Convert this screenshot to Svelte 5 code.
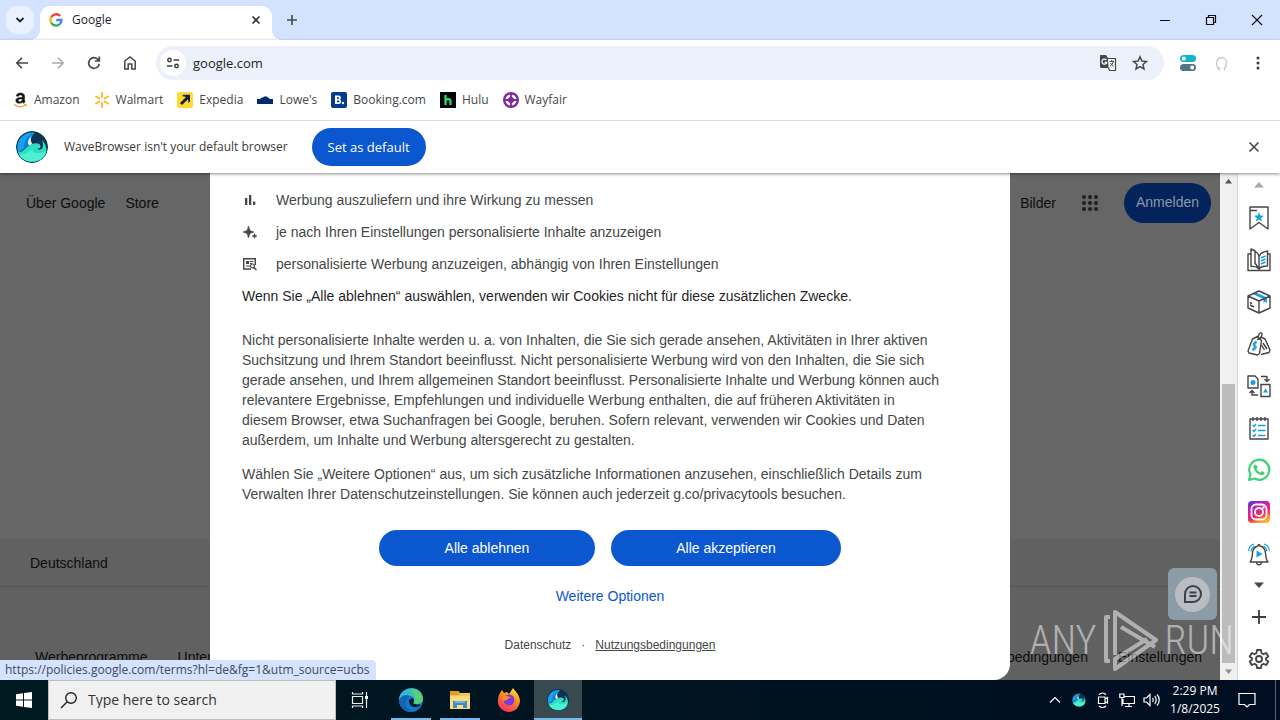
<script>
  const bookmarks = ['Amazon', 'Walmart', 'Expedia', "Lowe's", 'Booking.com', 'Hulu', 'Wayfair'];
  const tools = ['Bookmarks', 'Reading list', 'Packages', 'Coupons', 'Converter', 'Tasks', 'WhatsApp', 'Instagram', 'Alerts'];
  const purposes = [
    { icon: 'bars', text: 'Werbung auszuliefern und ihre Wirkung zu messen' },
    { icon: 'spark', text: 'je nach Ihren Einstellungen personalisierte Inhalte anzuzeigen' },
    { icon: 'ads', text: 'personalisierte Werbung anzuzeigen, abhängig von Ihren Einstellungen' }
  ];
  const dots = [3, 9, 15];
  let url = $state('google.com');
  let query = $state('');
</script>

{#snippet wave(size)}
  <svg width={size} height={size} viewBox="0 0 32 32" aria-hidden="true">
    <circle cx="16" cy="16" r="16" fill="#0b3450" />
    <path d="M1.500 19C0 9 7 1.500 16 1.500C20 1.500 18 3 16 5C13 8 11 11 11.500 15C8 16 6 20 2.500 22Z" fill="#16a2ee" />
    <path d="M16 3C10 6 7 12 8.500 18L12 15C11 11 13 7 17 3Z" fill="#0c7fd6" />
    <path d="M15.500 5C12 8 11 12 13 15L16.500 13C14.500 11 14.500 8 15.500 5Z" fill="#d9efff" />
    <path d="M2 21C7 22 9 16 15 13.500C20 11.500 24 12 24.500 15C24.700 17 23 18 21 17.500C25 21 29 17 26 9C31 14 32 21 28 26C21 34 5 32 2 21Z" fill="#2fdcc4" />
    <path d="M3 23C10 25 12 20 17 18.500C15 22 22 24 29.500 20C27 33 8 34 3 23Z" fill="#4df2d0" />
  </svg>
{/snippet}

{#snippet mark(name)}
  <svg width="16" height="16" viewBox="0 0 16 16" aria-hidden="true">
    {#if name === 'Amazon'}
      <path d="M10.300 5.500V4.200C10.300 2.600 6.700 2.500 6.400 4.300L4.200 4C4.700-.2 12.500.1 12.500 3.900V8.200C12.500 9 13 9.300 13.200 9.800L11.600 11.200C11 10.800 10.700 10.200 10.500 9.900C8 12.300 3.800 11.500 3.800 8.500C3.800 6.100 6.500 5.300 10.300 5.500ZM10.300 7C8 6.900 6.200 7.200 6.200 8.500C6.200 10.400 10.600 10.200 10.300 7Z" fill="#111" stroke="#111" stroke-width=".5" />
      <path d="M2 12.500C6 15.500 10.500 15.200 14 12.800" fill="none" stroke="#f5a031" stroke-width="1.300" />
      <path d="M12.200 12.300L14.300 12.300L13.700 14.300" fill="none" stroke="#f5a031" />
    {:else if name === 'Walmart'}
      <g stroke="#fdbb30" stroke-width="2" stroke-linecap="round">
        <path d="M8 1V5M8 11V15M2 4.500L5.300 6.400M10.700 9.600L14 11.500M2 11.500L5.300 9.600M10.700 6.400L14 4.500" />
      </g>
    {:else if name === 'Expedia'}
      <rect width="16" height="16" rx="2" fill="#fddb32" />
      <path d="M5 4L6.500 2.800H13V9.500L11.500 11L11 7.300L5 13L3 11L9 5Z" fill="#1d1d38" />
    {:else if name === "Lowe's"}
      <path d="M0 7H3L5 5.500H6L7 4.500H10L11 5.500L13 7H16V12H0Z" fill="#012a73" />
    {:else if name === 'Booking.com'}
      <rect width="16" height="16" rx="2" fill="#063a91" />
      <path d="M4 3.500H7.500C10.300 3.500 10.400 7 8.800 7.500C11 8 10.800 12 7.700 12H4ZM6 5.300V7H7.200C8.400 7 8.300 5.300 7.200 5.300ZM6 8.600V10.300H7.400C8.700 10.300 8.700 8.600 7.400 8.600Z" fill="#fff" />
      <circle cx="12" cy="11" r="1.200" fill="#fff" />
    {:else if name === 'Hulu'}
      <rect width="16" height="16" fill="#050505" />
      <path d="M5.500 3V13M5.500 9C5.500 6.500 10.500 6.500 10.500 9V13" fill="none" stroke="#25dd7b" stroke-width="2.200" />
    {:else}
      <circle cx="8" cy="8" r="8" fill="#7f2a9f" />
      <circle cx="8" cy="8" r="4.300" fill="none" stroke="#fff" stroke-width="2.600" />
      <path d="M8 2V14M2 8H14" stroke="#7f2a9f" stroke-width="1.800" />
      <circle cx="8" cy="8" r="2.700" fill="#7f2a9f" />
    {/if}
  </svg>
{/snippet}

{#snippet tool(name)}
  <svg width="24" height="24" viewBox="0 0 24 24" fill="none" stroke="#474347" stroke-width="1.400" stroke-linejoin="round" aria-hidden="true">
    {#if name === 'Bookmarks'}
      <path d="M3 1H21V23L12 16.500L3 23ZM3 4.500H10" />
      <path d="M12 6L13.300 9.500L17 9.700L14.100 12L15.100 15.500L12 13.500L8.900 15.500L9.900 12L7 9.700L10.700 9.500Z" fill="#16a0dc" stroke="none" />
    {:else if name === 'Reading list'}
      <path d="M4 18.500V1L8 3C10.500 4.500 11.500 6 12 8.500C14 4.500 16.500 4 20.500 3V18C16 18 13.500 19 12 21C10 19 7 18 4 18.500ZM12 8.500V21M8 3V15L12 21M4 6H1V22.500H23V6H20.500" />
      <path d="M14 10L18.500 8M14 13L18.500 11M14 16L18.500 14" stroke="#16a0dc" />
    {:else if name === 'Packages'}
      <path d="M5.500 4L9 2.500L20 7.500V13L18 11.500L16.500 13.500V9Z" fill="#16a0dc" stroke="none" />
      <path d="M12 1L23 6V18L12 23L1 18V6ZM1 6L12 11L23 6M12 11V23M3 15L7 17M3 12.500L5 13.500" />
    {:else if name === 'Coupons'}
      <path d="M5.500 7L10.500 4.500L14.500 8.500L12.500 21.500L10.500 23L2 21L1 19ZM14 5L18 7L23 18L22 20.500L14 22.500M16 11L20 17M14.500 13L17.500 18" />
      <path d="M11 8C11 2 13 0 14.500 1S14 6 11.500 8" />
      <path d="M10 10.500C6 9.500 5.500 13 8 14S8.500 18 5 17M8.500 9L6.500 19" stroke="#16a0dc" />
    {:else if name === 'Converter'}
      <path d="M1 2H8L11 5V14H1ZM14 10.500H23V22.500H14ZM14 2.500H20V7M17.500 5L20 7.500L22.500 5M11 21H5V17M2.500 19L5 16.500L7.500 19" />
      <circle cx="6" cy="8.500" r="2.500" fill="#16a0dc" stroke="none" />
      <path d="M18.500 14.500L21 18.500H16Z" fill="#16a0dc" stroke="none" />
    {:else if name === 'Tasks'}
      <path d="M3 3H21V23H3ZM6 1V5M10 1V5M14 1V5M18 1V5" />
      <path d="M5.500 9L7 10.500L9 8M5.500 14L7 15.500L9 13M5.500 19L7 20.500L9 18M11 9.500H18.500M11 14.500H18.500M11 19.500H18.500" stroke="#16a0dc" />
    {:else if name === 'WhatsApp'}
      <path d="M2 22L3.500 16.500A10 10 0 1 1 7.500 20.500Z" stroke="#3fd07a" stroke-width="2.200" />
      <path d="M8 6.500L9.500 7L10.500 9.500L9.500 11C10.500 13 12 14 13.500 14.500L15 13L17.500 14.500C17.500 16.500 15.500 17.500 14 17C10 16 7 12.500 6.500 9.500C6.500 8 7 7 8 6.500Z" fill="#3fd07a" stroke="none" />
    {:else if name === 'Instagram'}
      <defs>
        <linearGradient id="insta" x1="0.100" y1="0" x2="0.600" y2="1">
          <stop offset="0" stop-color="#5a35d8" /><stop offset=".4" stop-color="#d41cb0" /><stop offset=".7" stop-color="#f52f55" /><stop offset="1" stop-color="#ffb22c" />
        </linearGradient>
      </defs>
      <rect x="1" y="1" width="22" height="22" rx="4" fill="url(#insta)" stroke="none" />
      <g stroke="#fff" stroke-width="1.800">
        <rect x="4.500" y="4.500" width="15" height="15" rx="4.500" />
        <circle cx="12" cy="12" r="4" />
      </g>
      <circle cx="16.500" cy="7.500" r="1.200" fill="#fff" stroke="none" />
    {:else}
      <path d="M3 20C5 18 5 16 5.500 11C6 7 8 4.500 11 4C11 2 13 2 13 4C16 4.500 18 7 18.500 11C19 16 19 18 21 20ZM9.500 20.500C10 23.500 14 23.500 14.500 20.500" />
      <path d="M9.500 8.500L15.500 12L9.500 15.500Z" fill="#16a0dc" stroke="none" />
      <path d="M1.500 9C2 5 3.500 3 7 2M4 9.500C4.500 6.500 5.500 5 7.500 4M22.500 9C22 5 20.500 3 17 2M20 9.500C19.500 6.500 18.500 5 16.500 4" stroke="#16a0dc" stroke-width="1.200" />
    {/if}
  </svg>
{/snippet}

<div class="screen">
  <header class="tabs">
    <button class="tab-search" aria-label="Search tabs">
      <svg width="12" height="12" viewBox="0 0 12 12"><path d="M2.500 4L6 7.500L9.500 4" fill="none" stroke="#202124" stroke-width="1.800" /></svg>
    </button>
    <div class="tab">
      <svg width="14" height="14" viewBox="0 0 14 14" fill="none" stroke-width="2.300">
        <path d="M11.200 3A5.500 5.500 0 0 0 2.300 4.200" stroke="#ea4335" />
        <path d="M2.300 4.200A5.500 5.500 0 0 0 2.200 9.700" stroke="#fbbc05" />
        <path d="M2.200 9.700A5.500 5.500 0 0 0 10.800 11" stroke="#34a853" />
        <path d="M10.800 11A5.500 5.500 0 0 0 12.500 7H7.200" stroke="#4285f4" />
      </svg>
      <span>Google</span>
      <button aria-label="Close tab">
        <svg width="10" height="10" viewBox="0 0 10 10"><path d="M1.500 1.500L8.500 8.500M8.500 1.500L1.500 8.500" stroke="#303236" stroke-width="1.700" /></svg>
      </button>
    </div>
    <button class="new-tab" aria-label="New tab">
      <svg width="12" height="12" viewBox="0 0 12 12"><path d="M6 1V11M1 6H11" stroke="#45484d" stroke-width="1.600" /></svg>
    </button>
    <div class="window-controls">
      <button aria-label="Minimize"><svg width="12" height="12" viewBox="0 0 12 12"><path d="M1 6.500H11" stroke="#111" /></svg></button>
      <button aria-label="Restore"><svg width="12" height="12" viewBox="0 0 12 12" fill="none" stroke="#111" stroke-width="1.200"><path d="M1.500 3.500H8.500V10.500H1.500ZM3.500 3.500V1.500H10.500V8.500H8.500" /></svg></button>
      <button aria-label="Close"><svg width="12" height="12" viewBox="0 0 12 12"><path d="M1 1L11 11M11 1L1 11" stroke="#111" stroke-width="1.200" /></svg></button>
    </div>
  </header>

  <div class="chrome">
    <nav class="toolbar" aria-label="Navigation">
      <button aria-label="Back"><svg width="16" height="16" viewBox="0 0 16 16" fill="none" stroke="#474747" stroke-width="1.600"><path d="M14 8H3M8 2.800L2.800 8L8 13.200" /></svg></button>
      <button aria-label="Forward"><svg width="16" height="16" viewBox="0 0 16 16" fill="none" stroke="#a9a9a9" stroke-width="1.600"><path d="M2 8H13M8 2.800L13.200 8L8 13.200" /></svg></button>
      <button aria-label="Reload"><svg width="16" height="16" viewBox="0 0 16 16" fill="none" stroke="#474747" stroke-width="1.700"><path d="M13.200 8.800A5.300 5.300 0 1 1 12.200 4.800L13 5.800M13.300 1.500V6H8.800" /></svg></button>
      <button aria-label="Home"><svg width="16" height="16" viewBox="0 0 16 16" fill="none" stroke="#474747" stroke-width="1.500"><path d="M2.800 6L8 2L13.200 6V14H9.800V9H6.200V14H2.800Z" /></svg></button>
      <div class="address">
        <button class="site-info" aria-label="Site information"><svg width="14" height="14" viewBox="0 0 14 14" fill="none" stroke="#3c3c3c" stroke-width="1.500"><circle cx="3.500" cy="4" r="1.700" /><path d="M7.500 4H13M1 10H6.500" /><circle cx="10.500" cy="10" r="1.700" /></svg></button>
        <input aria-label="Address and search bar" bind:value={url} />
        <button aria-label="Translate">
          <svg width="18" height="18" viewBox="0 0 18 18"><path d="M1 1H7L9 4L11 14H2L1 13Z" fill="#46484c" /><path d="M9 4.500H16.500V16.500H10.500L9.500 13.500" fill="#f2f4fb" stroke="#46484c" stroke-width="1.200" /><path d="M7.300 6A2.500 2.500 0 1 0 7.800 8.300H5.700" stroke="#fff" fill="none" stroke-width="1.200" /><path d="M10.500 7.500H15M12.700 6V7.500M14.300 7.500C14 9.500 12.500 11 11 12M11.500 9C12.500 11 13.500 11.500 14.500 12" fill="none" stroke="#46484c" /></svg>
        </button>
        <button aria-label="Bookmark this page"><svg width="16" height="16" viewBox="0 0 16 16"><path d="M8 1.800L9.900 6L14.500 6.500L11 9.500L12 14L8 11.600L4 14L5 9.500L1.500 6.500L6.100 6Z" fill="none" stroke="#474747" stroke-width="1.500" /></svg></button>
      </div>
      <button class="ext" aria-label="Switches extension"><svg width="16" height="16" viewBox="0 0 16 16"><rect width="16" height="7" rx="3.500" fill="#12b4cb" /><rect y="9" width="16" height="7" rx="3.500" fill="#527487" /><circle cx="3.800" cy="3.500" r="2" fill="#fff" /><circle cx="12.200" cy="12.500" r="2" fill="#fff" /></svg></button>
      <button aria-label="Extension"><svg width="16" height="16" viewBox="0 0 16 16" fill="none" stroke="#c9c9c9" stroke-width="1.300"><path d="M6 13.500H4.500L2.500 10C2.500 5 4.500 2.500 7.500 2.500C10.500 2.500 12.500 5 12.500 8L11.500 13M5 12V15.500M10.500 12V15.500" /></svg></button>
      <button aria-label="Menu"><svg width="4" height="16" viewBox="0 0 4 16" fill="#3b3b3b"><circle cx="2" cy="3" r="1.500" /><circle cx="2" cy="8" r="1.500" /><circle cx="2" cy="13" r="1.500" /></svg></button>
    </nav>

    <nav class="bookmarks" aria-label="Bookmarks">
      {#each bookmarks as name}
        <a href="#{name}">{@render mark(name)}<span>{name}</span></a>
      {/each}
    </nav>

    <div class="infobar">
      <span class="brand">{@render wave(32)}</span>
      <span>WaveBrowser isn't your default browser</span>
      <button class="set-default">Set as default</button>
      <button class="dismiss" aria-label="Dismiss"><svg width="12" height="12" viewBox="0 0 12 12"><path d="M1.500 1.500L10.500 10.500M10.500 1.500L1.500 10.500" stroke="#474747" stroke-width="1.600" /></svg></button>
    </div>
  </div>

  <main>
    <div class="view">
      <div class="page">
        <div class="page-top">
          <a href="#about">Über Google</a>
          <a href="#store">Store</a>
          <a class="images" href="#images">Bilder</a>
          <button class="apps" aria-label="Google Apps">
            <svg width="18" height="18" viewBox="0 0 18 18" fill="#1f2021">{#each dots as x}{#each dots as y}<circle cx={x} cy={y} r="2" />{/each}{/each}</svg>
          </button>
          <a class="signin" href="#signin">Anmelden</a>
        </div>
        <footer>
          <div class="country">Deutschland</div>
          <div class="links">
            <a href="#ads">Werbeprogramme</a>
            <a href="#business">Unternehmen</a>
            <a class="terms" href="#terms">Nutzungsbedingungen</a>
            <a href="#settings">Einstellungen</a>
          </div>
        </footer>
      </div>

      <div class="shade">
        <section class="dialog" role="dialog" aria-label="Cookies">
          <ul>
            {#each purposes as p}
              <li>
                <svg width="16" height="16" viewBox="0 0 16 16" fill="#444746" aria-hidden="true">
                  {#if p.icon === 'bars'}
                    <path d="M3 6H5.300V13H3ZM7 3H9.300V13H7ZM11 9.500H13.300V13H11Z" />
                  {:else if p.icon === 'spark'}
                    <path d="M6.500 2L8 6.500L12 8L8 9.500L6.500 14L5 9.500L1 8L5 6.500ZM12.500 9.500L13.200 11.300L15 12L13.200 12.700L12.500 14.500L11.800 12.700L10 12L11.800 11.300Z" stroke="#444746" stroke-width=".5" />
                  {:else}
                    <path d="M9 13H1.700V2.700H13.300V9" fill="none" stroke="#444746" stroke-width="1.400" />
                    <path d="M4 5H7V8H4ZM8 5H11.500V6H8ZM8 7H10V8H8ZM4 9.500H8V10.500H4Z" />
                    <circle cx="10.500" cy="10" r="2" fill="none" stroke="#444746" stroke-width="1.200" /><path d="M11.500 11L14.500 14" stroke="#444746" stroke-width="1.500" />
                  {/if}
                </svg>
                {p.text}
              </li>
            {/each}
          </ul>
          <p class="reject-note">Wenn Sie „Alle ablehnen“ auswählen, verwenden wir Cookies nicht für diese zusätzlichen Zwecke.</p>
          <p class="detail">Nicht personalisierte Inhalte werden u. a. von Inhalten, die Sie sich gerade ansehen, Aktivitäten in Ihrer aktiven<br />Suchsitzung und Ihrem Standort beeinflusst. Nicht personalisierte Werbung wird von den Inhalten, die Sie sich<br />gerade ansehen, und Ihrem allgemeinen Standort beeinflusst. Personalisierte Inhalte und Werbung können auch<br />relevantere Ergebnisse, Empfehlungen und individuelle Werbung enthalten, die auf früheren Aktivitäten in<br />diesem Browser, etwa Suchanfragen bei Google, beruhen. Sofern relevant, verwenden wir Cookies und Daten<br />außerdem, um Inhalte und Werbung altersgerecht zu gestalten.</p>
          <p class="more">Wählen Sie „Weitere Optionen“ aus, um sich zusätzliche Informationen anzusehen, einschließlich Details zum<br />Verwalten Ihrer Datenschutzeinstellungen. Sie können auch jederzeit g.co/privacytools besuchen.</p>
          <div class="choices">
            <button>Alle ablehnen</button>
            <button class="accept">Alle akzeptieren</button>
          </div>
          <a class="options" href="#options">Weitere Optionen</a>
          <div class="legal"><a href="#privacy">Datenschutz</a><span>·</span><a class="hovered" href="#tos">Nutzungsbedingungen</a></div>
        </section>
      </div>

      <button class="chat" aria-label="Chat">
        <span><svg width="22" height="22" viewBox="0 0 22 22" fill="none" stroke="#35424f" stroke-width="2"><path d="M3 19V11A8 8 0 1 1 11 19ZM7.500 9.500H14.500M7.500 13H14.500" /></svg></span>
      </button>
      <div class="status">https://policies.google.com/terms?hl=de&amp;fg=1&amp;utm_source=ucbs</div>
    </div>

    <div class="scroll" aria-hidden="true">
      <svg width="17" height="17" viewBox="0 0 17 17"><path d="M5 10.500L8.500 6L12 10.500Z" fill="#505050" /></svg>
      <div class="track"></div>
      <div class="thumb"></div>
      <svg width="17" height="17" viewBox="0 0 17 17"><path d="M5 6.500L8.500 11L12 6.500Z" fill="#8c8c8c" /></svg>
    </div>

    <aside>
      <button class="up" aria-label="Scroll up"><svg width="10" height="6" viewBox="0 0 10 6"><path d="M0 5.500L5 0L10 5.500Z" fill="#a9a9a9" /></svg></button>
      {#each tools as name}
        <button class="tool" aria-label={name}>{@render tool(name)}</button>
      {/each}
      <button class="down" aria-label="Scroll down"><svg width="10" height="6" viewBox="0 0 10 6"><path d="M0 .5L5 6L10 .5Z" fill="#474747" /></svg></button>
      <button class="tool add" aria-label="Add"><svg width="14" height="14" viewBox="0 0 14 14"><path d="M7 0V14M0 7H14" stroke="#3c3c3c" stroke-width="1.800" /></svg></button>
      <button class="tool" aria-label="Settings">
        <svg width="22" height="22" viewBox="0 0 22 22" fill="none" stroke="#474747" stroke-width="1.900" stroke-linejoin="round"><path d="M9 2H13L13.500 5L15.500 6.200L18.300 5L20.300 8.500L18 10.300V11.700L20.300 13.500L18.300 17L15.500 15.800L13.500 17L13 20H9L8.500 17L6.500 15.800L3.700 17L1.700 13.500L4 11.700V10.300L1.700 8.500L3.700 5L6.500 6.200L8.500 5Z" /><circle cx="11" cy="11" r="3" /></svg>
      </button>
    </aside>

    <div class="watermark" aria-hidden="true">
      <span>ANY</span>
      <svg width="56" height="64" viewBox="0 0 56 64" fill="none" stroke="#fff" stroke-width="4" stroke-linejoin="round"><path d="M7 52H3V8H7M12 46V3L53 31L12 60V50L44 30M18 18L52 38" /></svg>
      <span>RUN</span>
    </div>
  </main>

  <div class="taskbar">
    <button class="start" aria-label="Start"><svg width="16" height="16" viewBox="0 0 16 16" fill="#fff"><path d="M0 2.200L7 1.200V7.500H0ZM8 1L16 0V7.500H8ZM0 8.500H7V14.800L0 13.800ZM8 8.500H16V16L8 15Z" /></svg></button>
    <label class="search">
      <svg width="18" height="18" viewBox="0 0 18 18" fill="none" stroke="#222" stroke-width="1.400"><circle cx="11" cy="7" r="5.300" /><path d="M7 11L1 17" /></svg>
      <input type="text" placeholder="Type here to search" aria-label="Search" bind:value={query} />
    </label>
    <button class="app task-view" aria-label="Task view"><svg width="18" height="18" viewBox="0 0 18 18" fill="none" stroke="#e8edf0" stroke-width="1.200"><path d="M1.500 5.500H11.500V12.500H1.500ZM1.500 1V3H11.500V1M1.500 17V15H11.500V17M15.500 1V17" /><path d="M14 5H17V8H14Z" fill="#fff" stroke="none" /></svg></button>
    <button class="app open" aria-label="Edge">
      <svg width="24" height="24" viewBox="0 0 24 24"><circle cx="12" cy="12" r="12" fill="#1479c9" /><path d="M0 11C2-2 22-4 24 10C24 17 17 17 14 15C17 11 14 8 10 8C5 8 1 10 0 14Z" fill="#35b9cf" /><path d="M14 1C21 2 25 8 23.500 13C21 17 16 16 14.500 15C18 9 15 4 10 3Z" fill="#58cf73" /><path d="M9 10C4 14 7 22 14 23.800C5 25 0 18 0 12C3 6 9 6 12 9Z" fill="#1565b5" /><path d="M10 12C10 19 16 21 22 17C20 16 15 17 14 15C16 13 15 11 13 10Z" fill="#061a2a" /></svg>
    </button>
    <button class="app open" aria-label="File Explorer">
      <svg width="24" height="24" viewBox="0 0 24 24"><path d="M2 3H10L12 5H22V21H2Z" fill="#f6c64b" /><path d="M2 3H10L12 5L10 7H2Z" fill="#df9d24" /><path d="M2 8H22V21H2Z" fill="#fbdb7c" /><path d="M5 20V13H19V20H15V17H9V20Z" fill="#3c8bc7" /><path d="M7 13H17V15H7Z" fill="#6bb4e5" /></svg>
    </button>
    <button class="app" aria-label="Firefox">
      <svg width="24" height="24" viewBox="0 0 24 24"><defs><linearGradient id="fox" x1=".8" y1="0" x2=".3" y2="1"><stop offset="0" stop-color="#ffe22e" /><stop offset=".45" stop-color="#ff8a22" /><stop offset="1" stop-color="#f72b62" /></linearGradient></defs><path d="M3 5L5 2L7 5L10 4L12 6L16 0C18 3 22 6 23 12C23 19 18 24 12 24S0 19 1 12C1 9 2 7 3 5Z" fill="url(#fox)" /><circle cx="12" cy="12" r="5.500" fill="#7a3bdc" /><path d="M5 9C8 7 12 8 14 10C12 10 11 11 10 12C7 14 4 12 5 9Z" fill="#ff8a22" /></svg>
    </button>
    <button class="app open current" aria-label="WaveBrowser">{@render wave(22)}</button>
    <div class="tray">
      <button aria-label="Show hidden icons"><svg width="12" height="12" viewBox="0 0 12 12"><path d="M1 8.500L6 3.500L11 8.500" fill="none" stroke="#fff" stroke-width="1.200" /></svg></button>
      <button aria-label="WaveBrowser tray">{@render wave(14)}</button>
      <button aria-label="Meet now"><svg width="16" height="16" viewBox="0 0 16 16" fill="none" stroke="#fff" stroke-width="1.200"><path d="M3.500 5H10V11.500H3.500ZM10 7L12.500 5.500V11L10 9.500M4 2.500C6 .5 9 .5 11 2.500M4 14C6 15.800 9 15.800 11 14" /></svg></button>
      <button aria-label="Network"><svg width="16" height="16" viewBox="0 0 16 16" fill="none" stroke="#fff" stroke-width="1.200"><path d="M5 4.500H15.500V11.500H4V7M10 11.500V14M6 14.500H13M.8 2H5V5.500H.8ZM3 5.500V14" /></svg></button>
      <button aria-label="Volume"><svg width="17" height="16" viewBox="0 0 17 16" fill="none" stroke="#fff" stroke-width="1.200"><path d="M1 6H3.500L7 2.500V13.500L3.500 10H1ZM9.500 6C10.500 7 10.500 9 9.500 10M11.700 4C13.700 6 13.700 10 11.700 12M14 2.500C17 5.500 17 10.500 14 13.500" /></svg></button>
    </div>
    <div class="clock"><span>2:29 PM</span><span>1/8/2025</span></div>
    <button class="notify" aria-label="Notifications"><svg width="18" height="18" viewBox="0 0 18 18" fill="none" stroke="#fff" stroke-width="1.200"><path d="M1 2.500H17V13.500H11.500L9 16L6.500 13.500H1Z" /></svg></button>
    <button class="peek" aria-label="Show desktop"></button>
  </div>
</div>

<style>
  :global(body) { margin: 0; }
  .screen { height: 100vh; display: flex; flex-direction: column; overflow: hidden; font: 12px/16px "Open Sans", "Noto Sans", sans-serif; color: #1f1f1f; }
  .screen * { box-sizing: border-box; }
  button { border: 0; padding: 0; background: none; font: inherit; color: inherit; display: flex; align-items: center; justify-content: center; flex: none; }
  input { border: 0; padding: 0; background: none; font: inherit; color: inherit; outline: 0; min-width: 0; flex: 1; }
  a { color: inherit; text-decoration: none; white-space: nowrap; }
  svg { display: block; flex: none; }

  .tabs { flex: none; height: 40px; background: #d3e3fd; display: flex; padding-left: 6px; }
  .tab-search { width: 28px; height: 28px; margin: 6px 6px 0 0; border-radius: 10px; background: #e9f1fe; }
  .tab { position: relative; width: 232px; margin-top: 6px; padding: 0 8px 6px 9px; background: #fff; border-radius: 10px 10px 0 0; display: flex; align-items: center; gap: 9px; }
  .tab::before, .tab::after { content: ""; position: absolute; bottom: 0; width: 10px; height: 10px; }
  .tab::before { right: 100%; background: radial-gradient(circle at 0 0, transparent 10px, #fff 10px); }
  .tab::after { left: 100%; background: radial-gradient(circle at 100% 0, transparent 10px, #fff 10px); }
  .tab span { flex: 1; }
  .tab button { width: 16px; height: 16px; }
  .new-tab { width: 40px; }
  .window-controls { margin-left: auto; display: flex; }
  .window-controls button { width: 46px; }

  .chrome { flex: none; position: relative; z-index: 2; background: #fff; box-shadow: 0 1px 3px rgba(0, 0, 0, .45); }
  .toolbar { display: flex; align-items: center; padding: 6px 4px 0; }
  .toolbar > button { width: 36px; height: 34px; }
  .toolbar > .ext { width: 32px; }
  .address { flex: 1; height: 34px; margin: 0 8px; padding: 0 8px 0 4px; border-radius: 17px; background: #ebf0fa; display: flex; align-items: center; font-size: 13px; }
  .address button { width: 32px; height: 32px; }
  .address .site-info { width: 26px; height: 26px; border-radius: 13px; background: #fff; }
  .address input { margin-left: 7px; }
  .bookmarks { height: 40px; padding: 0 12px; display: flex; align-items: center; gap: 14px; color: #474747; }
  .bookmarks a { display: flex; align-items: center; gap: 6px; }
  .infobar { height: 53px; padding: 0 16px; border-top: 1px solid #dadce0; display: flex; align-items: center; gap: 16px; color: #3a3a3a; }
  .brand svg { border-radius: 50%; }
  .set-default { height: 38px; margin-left: 8px; padding: 0 16px; border-radius: 19px; background: #0b57d0; color: #fff; font-size: 13px; }
  .dismiss { width: 20px; height: 20px; margin-left: auto; }

  main { flex: 1; min-height: 0; position: relative; display: flex; background: #fff; }
  .view { flex: 1; min-width: 0; position: relative; overflow: hidden; font: 14px/20px "Liberation Sans", Arial, sans-serif; }
  .page { height: 100%; background: #666; color: #0d0d0d; display: flex; flex-direction: column; }
  .page-top { display: flex; align-items: center; gap: 20px; padding: 10px 9px 0 26px; }
  .images { margin-left: auto; }
  .page-top .apps { width: 40px; margin: 0 -6px 0 -6px; }
  .signin { margin-left: 0; height: 40px; line-height: 38px; padding: 0 12px; border-radius: 20px; background: #04235a; color: #8b97ab; }
  footer { margin-top: auto; height: 141px; flex: none; background: #616161; }
  .country { padding: 14px 30px 13px; border-bottom: 1px solid #565656; }
  .links { display: flex; gap: 30px; padding: 60px 18px 0 35px; }
  .terms { margin-left: auto; }

  .shade { position: absolute; inset: 0; display: flex; justify-content: center; }
  .dialog { width: 100%; max-width: 800px; padding: 17px 32px 0; background: #fff; border-radius: 0 0 16px 16px; color: #444746; white-space: nowrap; display: flex; flex-direction: column; }
  ul { list-style: none; margin: 0; padding: 0; display: flex; flex-direction: column; gap: 12px; }
  li { display: flex; align-items: center; gap: 18px; }
  p { margin: 0; }
  .reject-note { margin-top: 12px; color: #1f1f1f; }
  .detail { margin-top: 24px; }
  .more { margin-top: 14px; }
  .choices { display: flex; justify-content: center; gap: 16px; margin-top: 26px; }
  .choices button { width: 216px; height: 36px; border-radius: 18px; background: #0b57d0; color: #fff; }
  .choices .accept { width: 230px; }
  .options { align-self: center; margin-top: 20px; color: #0b57d0; }
  .legal { display: flex; justify-content: center; gap: 10px; margin-top: 29px; font-size: 12px; }
  .hovered { text-decoration: underline; }

  .chat { position: absolute; right: 3px; bottom: 60px; width: 49px; height: 52px; border-radius: 6px; background: #8c9ca6; }
  .chat span { width: 35px; height: 35px; border-radius: 50%; background: #b9bdc2; display: flex; align-items: center; justify-content: center; }
  .status { position: absolute; left: 0; bottom: 0; height: 20px; padding: 0 6px 0 5px; border-radius: 0 4px 0 0; background: #d5e3fc; color: #3d4a63; font: 12px/20px "Open Sans", "Noto Sans", sans-serif; }

  .scroll { width: 17px; background: #f0f0f0; display: flex; flex-direction: column; }
  .track { flex: 194; }
  .thumb { flex: 279; margin: 0 2px; background: #bcbcbc; }
  aside { width: 43px; border-left: 1px solid #d5d5d5; display: flex; flex-direction: column; }
  aside button { width: 100%; }
  .up { height: 24px; }
  .tool { height: 42px; }
  .down { height: 20px; }
  .add { margin-top: auto; }

  .watermark { position: absolute; right: 46px; bottom: 7px; display: flex; align-items: center; gap: 6px; opacity: .5; color: #fff; font: 300 40px/44px "Roboto Condensed", "Open Sans Condensed", "Noto Sans ExtraCondensed", "DejaVu Sans Condensed", sans-serif; pointer-events: none; }

  .taskbar { flex: none; height: 40px; display: flex; background: linear-gradient(90deg, #001820, #00141f 50%, #000d22); color: #fff; }
  .start { width: 48px; }
  .search { width: 288px; padding: 0 11px; display: flex; align-items: center; gap: 10px; background: #f0f0f0; border: 1px solid #bfbfbf; color: #333; font-size: 14px; }
  .search input::placeholder { color: #333; opacity: 1; }
  .app { width: 48px; margin-right: 1px; position: relative; }
  .task-view { margin-right: 3px; }
  .open::after { content: ""; position: absolute; left: 4px; right: 4px; bottom: 0; height: 2px; background: #76b9ed; }
  .current { background: #38494f; }
  .current::after { left: 0; right: 0; }
  .tray { margin-left: auto; display: flex; }
  .tray button { width: 24px; }
  .clock { width: 64px; display: flex; flex-direction: column; justify-content: center; align-items: center; line-height: 18px; }
  .notify { width: 40px; }
  .peek { width: 5px; margin-left: 8px; border-left: 1px solid #59636e; }
</style>
